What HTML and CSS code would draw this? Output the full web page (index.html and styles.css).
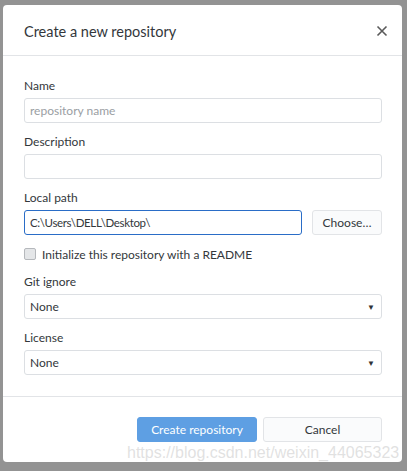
FILE: index.html
```html
<!DOCTYPE html>
<html>
<head>
<meta charset="utf-8">
<link rel="stylesheet" href="styles.css">
</head>
<body>
<div class="dialog">
  <div class="header">
    <div class="title">Create a new repository</div>
    <svg class="close" width="12" height="12" viewBox="0 0 12 12"><path d="M1.5 1.5 L10.5 10.5 M10.5 1.5 L1.5 10.5" stroke="#5a5a5a" stroke-width="1.6" fill="none"/></svg>
  </div>
  <div class="body">
    <div class="field">
      <div class="label">Name</div>
      <div class="input placeholder">repository name</div>
    </div>
    <div class="field">
      <div class="label">Description</div>
      <div class="input"></div>
    </div>
    <div class="field">
      <div class="label">Local path</div>
      <div class="pathrow">
        <div class="input focused"><span class="path">C:\Users\DELL\Desktop\</span></div>
        <div class="btn choose">Choose…</div>
      </div>
    </div>
    <div class="check">
      <span class="box"></span>
      <span>Initialize this repository with a README</span>
    </div>
    <div class="field">
      <div class="label">Git ignore</div>
      <div class="input select"><span>None</span><span class="arrow">▼</span></div>
    </div>
    <div class="field">
      <div class="label">License</div>
      <div class="input select"><span>None</span><span class="arrow">▼</span></div>
    </div>
  </div>
  <div class="footer">
    <div class="btn primary">Create repository</div>
    <div class="btn cancel">Cancel</div>
  </div>
  <div class="watermark">https://blog.csdn.net/weixin_44065323</div>
</div>
</body>
</html>
```
FILE: styles.css
```css
html, body {
  margin: 0;
  padding: 0;
  background: #939393;
  width: 407px;
  height: 471px;
  overflow: hidden;
  font-family: "Lato", "Noto Sans", sans-serif;
  color: #2b2f33;
}
body {
  padding: 5px 5px 0 3px;
  box-sizing: border-box;
}
.dialog {
  position: relative;
  width: 399px;
  height: 457px;
  background: #fff;
  border-radius: 4px;
  display: flex;
  flex-direction: column;
  box-sizing: border-box;
}
.header {
  height: 51px;
  border-bottom: 1px solid #e2e4e7;
  display: flex;
  align-items: center;
  justify-content: space-between;
  padding: 0 14px 0 21px;
  box-sizing: border-box;
  flex: none;
}
.title {
  font-size: 14.5px;
  color: #33373b;
  margin-top: 3px;
}
.close {
  margin-top: 2px;
}
.body {
  padding: 22px 20px 0 21px;
  height: 341px;
  box-sizing: border-box;
  border-bottom: 1px solid #e2e4e7;
  flex: none;
  display: flex;
  flex-direction: column;
}
.field {
  margin-bottom: 11px;
}
.label {
  font-size: 12px;
  line-height: 16px;
  height: 16px;
  margin-bottom: 4px;
  color: #33373b;
}
.input {
  height: 25px;
  border: 1px solid #dcdfe3;
  border-radius: 3px;
  box-sizing: border-box;
  padding: 0 5px;
  font-size: 12px;
  line-height: 23px;
  color: #33373b;
  background: #fff;
}
.placeholder {
  color: #9a9ea3;
}
.pathrow {
  display: flex;
  gap: 10px;
}
.focused {
  flex: 1;
  border-color: #2a6dc7;
}
.path {
  font-size: 11.5px;
  letter-spacing: -0.35px;
}
.btn {
  height: 25px;
  border-radius: 3px;
  box-sizing: border-box;
  font-size: 12px;
  line-height: 23px;
  text-align: center;
}
.choose {
  width: 70px;
  background: #fafbfc;
  border: 1px solid #e2e4e7;
  color: #33373b;
}
.check {
  display: flex;
  align-items: center;
  gap: 6px;
  font-size: 12px;
  height: 16px;
  margin-bottom: 12px;
  color: #33373b;
}
.box {
  width: 12px;
  height: 12px;
  border: 1px solid #b5b8bc;
  border-radius: 2px;
  background: #e4e6e8;
  box-sizing: border-box;
  flex: none;
}
.select {
  display: flex;
  justify-content: space-between;
  align-items: center;
  line-height: normal;
}
.arrow {
  font-size: 8px;
  color: #2f3337;
  margin-right: 1px;
}
.footer {
  flex: 1;
  display: flex;
  justify-content: flex-end;
  align-items: flex-start;
  gap: 6px;
  padding: 20px 20px 0 0;
  box-sizing: border-box;
}
.primary {
  width: 120px;
  background: #5e9fe3;
  border: 1px solid #5e9fe3;
  color: #fff;
}
.cancel {
  width: 119px;
  background: #fafbfc;
  border: 1px solid #e2e4e7;
  color: #33373b;
}
.watermark {
  position: absolute;
  left: 124px;
  top: 439px;
  font-family: "Liberation Sans", Arial, sans-serif;
  font-size: 16px;
  color: rgba(200, 200, 200, 0.55);
  white-space: nowrap;
  pointer-events: none;
}
```
